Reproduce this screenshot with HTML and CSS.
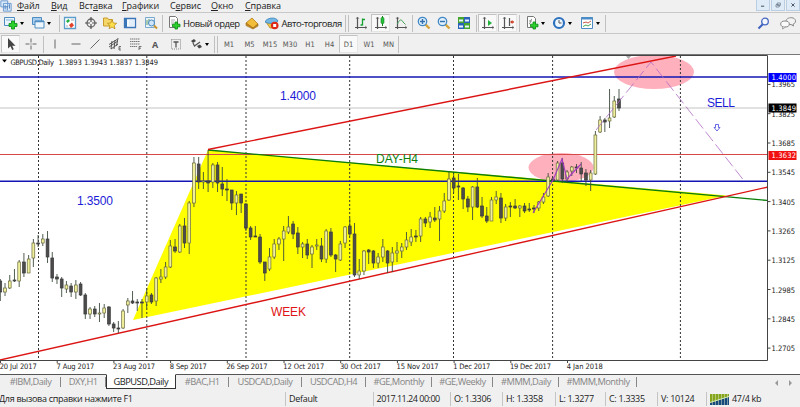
FILE: index.html
```html
<!DOCTYPE html>
<html lang="ru">
<head>
    <meta charset="UTF-8">
    <meta name="viewport" content="width=device-width, initial-scale=1.0">
    <title>GBPUSD,Daily</title>
    <link rel="stylesheet" href="styles.css">
</head>
<body>
    <svg class="symbols">
        <symbol id="i-app" viewBox="0 0 14 14"><path d="M1 1h8v7H1zM4 4h9v9H4z" fill="#dcecfb" stroke="#5b8fcb"/><path d="M6 6v5M8.500 7v5M11 5v5" stroke="#3f74b5"/></symbol>
        <symbol id="i-newchart" viewBox="0 0 14 14"><path d="M.5 1.500h10v8H.5z" fill="#eaf4fc" stroke="#4f8dc0"/><path d="M2 4h7" stroke="#7db4dd"/><path d="M7.500 5h3v2.500H13v3h-2.500V13h-3v-2.500H5v-3h2.500z" fill="#2bd02b" stroke="#078a15" stroke-width=".8"/></symbol>
        <symbol id="i-profiles" viewBox="0 0 14 14"><path d="M1.500 1.500h9v7h-9z" fill="#a8cdee" stroke="#4f8dc0"/><path d="M4 5h9v7H4z" fill="#eef6fd" stroke="#4f8dc0"/><path d="M4 5.500h9" stroke="#4f8dc0" stroke-width="1.500"/></symbol>
        <symbol id="i-market" viewBox="0 0 14 14"><path d="M1.500 1.500h11v11h-11z" fill="#fff" stroke="#5d9dcc" stroke-width="1.300"/><path d="M3 5l2.500-2L7 5 4.500 7z" fill="#20b040"/><path d="M6 9l3-2.500 2 3L8 12z" fill="#e5442c"/><path d="M8 4h3M3 10h2" stroke="#aaa"/></symbol>
        <symbol id="i-target" viewBox="0 0 14 14"><circle cx="7" cy="7" r="4" fill="none" stroke="#666" stroke-width="1.300"/><path d="M7 1v5M7 8v5M1 7h5M8 7h5" stroke="#555" stroke-width="1.200"/></symbol>
        <symbol id="i-navigator" viewBox="0 0 14 14"><path d="M.5 2h4l1 1.500h4V10h-9z" fill="#f5d769" stroke="#c99b2c"/><path d="M9 4l1.400 3 3.200.3-2.400 2.200.8 3.300L9 11l-2.900 1.800.8-3.300L4.500 7.300l3.200-.3z" fill="#ffe14d" stroke="#b98b1c" stroke-width=".8"/></symbol>
        <symbol id="i-terminal" viewBox="0 0 14 14"><path d="M1.500 2.500h11v9h-11z" fill="#f5faff" stroke="#3975b7" stroke-width="1.300"/><path d="M3 3v8" stroke="#3975b7" stroke-width="2"/><path d="M6 5h5M6 7h5M6 9h5" stroke="#b7d3ef" stroke-width=".6"/></symbol>
        <symbol id="i-tester" viewBox="0 0 14 14"><path d="M1.500 1.500h9v10h-9z" fill="#e9f3fb" stroke="#79a9cf"/><path d="M3 4v5M5 3v4" stroke="#64a064"/><circle cx="7.500" cy="7" r="3" fill="#cfe6fa" stroke="#4a88bd"/><path d="M10 9.500l3 3" stroke="#c8962b" stroke-width="2"/></symbol>
        <symbol id="i-order" viewBox="0 0 14 14"><path d="M2.500.5h6l2 2v9h-8z" fill="#fff" stroke="#777"/><path d="M4 4h4M4 6h3M4 8h3" stroke="#999" stroke-width=".8"/><path d="M8 6h2.500v2.200H13v2.600h-2.500V13H8v-2.200H5.500V8.200H8z" fill="#2bd02b" stroke="#078a15" stroke-width=".8"/></symbol>
        <symbol id="i-book" viewBox="0 0 14 14"><path d="M1 7l6-5 6 6-5 4z" fill="#f1bd3a" stroke="#b67a16" stroke-width=".8"/><path d="M1 7v2.500l7 3.500 5-3V8l-5 4z" fill="#c98b22" stroke="#9c6a12" stroke-width=".6"/></symbol>
        <symbol id="i-auto" viewBox="0 0 14 14"><path d="M1 6h11l-3 6H5z" fill="#f0c340" stroke="#b78a25" stroke-width=".8"/><path d="M0 6c1-4 11-6 13-1-2 3-10 3-13 1z" fill="#74b8e6" stroke="#3a84b8" stroke-width=".8"/><circle cx="9.700" cy="9.500" r="3.800" fill="#dd2a16"/><path d="M8.200 8h3v3h-3z" fill="#fff"/></symbol>
        <symbol id="i-bars" viewBox="0 0 14 14"><path d="M3.500 1v12M1 11.500h12" stroke="#555" stroke-width="1.200"/><path d="M2 3l1.500-2L5 3M11 10l2 1.500-2 1.500" fill="none" stroke="#777" stroke-width=".7"/><path d="M8.500 2.500v7M8.500 3.500H11M6.500 9h2" stroke="#15a030" stroke-width="1.300"/></symbol>
        <symbol id="i-candle" viewBox="0 0 14 14"><path d="M3.500 1v12M1 11.500h12" stroke="#555" stroke-width="1.200"/><path d="M2 3l1.500-2L5 3M11 10l2 1.500-2 1.500" fill="none" stroke="#777" stroke-width=".7"/><path d="M8.500 0v10" stroke="#15801c"/><rect x="7" y="1.500" width="3" height="6" rx="1" fill="#22c43c" stroke="#15801c" stroke-width=".6"/></symbol>
        <symbol id="i-line" viewBox="0 0 14 14"><path d="M3.500 1v12M1 11.500h12" stroke="#555" stroke-width="1.200"/><path d="M2 3l1.500-2L5 3M11 10l2 1.500-2 1.500" fill="none" stroke="#777" stroke-width=".7"/><path d="M3.500 8c2-5 4-5 5.500-2l2.500 2.500" fill="none" stroke="#42a155"/></symbol>
        <symbol id="i-zoomin" viewBox="0 0 14 14"><path d="M8.500 8.500l4 4" stroke="#d4a437" stroke-width="2.400"/><circle cx="5.500" cy="5.500" r="4.200" fill="#dff0fc" stroke="#4187c4" stroke-width="1.300"/><path d="M3 5.500h5M5.500 3v5" stroke="#316fae" stroke-width="1.400"/></symbol>
        <symbol id="i-zoomout" viewBox="0 0 14 14"><path d="M8.500 8.500l4 4" stroke="#d4a437" stroke-width="2.400"/><circle cx="5.500" cy="5.500" r="4.200" fill="#dff0fc" stroke="#4187c4" stroke-width="1.300"/><path d="M3 5.500h5" stroke="#316fae" stroke-width="1.400"/></symbol>
        <symbol id="i-tile" viewBox="0 0 14 14"><path d="M1 1h6v6H1zM7 7h6v6H7z" fill="#43a52b"/><path d="M7 1h6v6H7zM1 7h6v6H1z" fill="#2a62ba"/><path d="M2 4.500h4M8 4.500h4M2 10.500h4M8 10.500h4" stroke="#e8f3ff" stroke-width="2.200"/></symbol>
        <symbol id="i-scroll" viewBox="0 0 14 14"><path d="M3.500 1v12M1 11.500h12" stroke="#555" stroke-width="1.200"/><path d="M2 3l1.500-2L5 3M11 10l2 1.500-2 1.500" fill="none" stroke="#777" stroke-width=".7"/><path d="M7 4l4 3-4 3z" fill="#23b23c"/></symbol>
        <symbol id="i-shift" viewBox="0 0 14 14"><path d="M3.500 1v12M1 11.500h12M8.500 2v8" stroke="#555" stroke-width="1.200"/><path d="M2 3l1.500-2L5 3M11 10l2 1.500-2 1.500" fill="none" stroke="#777" stroke-width=".7"/><path d="M9 6l2.500-2v1.300H13v1.400h-1.500V8z" fill="#cf3d24"/></symbol>
        <symbol id="i-indic" viewBox="0 0 14 14"><path d="M2.500.5h6l2 2v9h-8z" fill="#fff" stroke="#777"/><path d="M4 8c2 0 1-5 3-5M4 5h3" fill="none" stroke="#777" stroke-width=".8"/><path d="M8 6h2.500v2.200H13v2.600h-2.500V13H8v-2.200H5.500V8.200H8z" fill="#2bd02b" stroke="#078a15" stroke-width=".8"/></symbol>
        <symbol id="i-clock" viewBox="0 0 14 14"><circle cx="7" cy="7" r="5" fill="#eef6ff" stroke="#2c71bd" stroke-width="2.200"/><path d="M7 4v3h2.500" fill="none" stroke="#555"/></symbol>
        <symbol id="i-template" viewBox="0 0 14 14"><path d="M1.500 1.500h11v11h-11z" fill="#fff" stroke="#4c8cc6"/><path d="M1 2.500h12" stroke="#4c8cc6" stroke-width="2"/><path d="M3 7l3-1 2 1 3-2" fill="none" stroke="#c65b48"/><path d="M3 10.500l3-1.500 2 1 3-2" fill="none" stroke="#4aa554"/></symbol>
        <symbol id="i-search" viewBox="0 0 14 14"><path d="M6 8l-4.500 4.500" stroke="#3d5fc0" stroke-width="2"/><circle cx="8" cy="5.500" r="3.300" fill="#f4f8ff" stroke="#4867c0" stroke-width="1.300"/></symbol>
        <symbol id="i-chat" viewBox="0 0 16 14"><path d="M6 5.500C6 .5 15.500.5 15.500 5c0 2-1.500 3-2.500 3l.5 2-2.500-1.500C8 9 6 7.500 6 5.500z" fill="#f3f3f3" stroke="#888"/><ellipse cx="5" cy="8" rx="4.300" ry="3" fill="#fafafa" stroke="#888"/><path d="M3 10.500L2.500 13 5.500 11" fill="#fafafa" stroke="#888" stroke-width=".8"/></symbol>
        <symbol id="i-cursor" viewBox="0 0 14 14"><path d="M4 1v10.500l2.500-2.200 1.700 3.700 1.600-.8L8.200 8.700h3.300z" fill="#444"/></symbol>
        <symbol id="i-cross" viewBox="0 0 14 14"><path d="M7 1.500v4M7 8.500v4M1.500 7h4M8.500 7h4M6.500 7h1" stroke="#666"/></symbol>
        <symbol id="i-vline" viewBox="0 0 14 14"><path d="M7 2.500v9" stroke="#666"/></symbol>
        <symbol id="i-hline" viewBox="0 0 14 14"><path d="M2.500 7h9" stroke="#666"/></symbol>
        <symbol id="i-trend" viewBox="0 0 14 14"><path d="M2.500 11.500l9-9" stroke="#666"/></symbol>
        <symbol id="i-channel" viewBox="0 0 14 14"><path d="M1 7.500l8-5M1 10l9-6M3 12l7-5M4 4l-1 8M7 3L6 12M10 1L8.500 9" stroke="#555" fill="none"/><path d="M13 9.500h-2v3.500h2M11 11.200h1.700" stroke="#555" fill="none" stroke-width=".8"/></symbol>
        <symbol id="i-fibo" viewBox="0 0 14 14"><path d="M2 2h10M2 4.500h10M2 7h10M2 9.500h7" stroke="#777" stroke-dasharray="1.500 .5"/><path d="M11 13V9.500h2.500M11 11.200h2" stroke="#555" fill="none" stroke-width=".8"/></symbol>
        <symbol id="i-label" viewBox="0 0 14 14"><path d="M2.500 2.500h9v9.500h-9z" fill="none" stroke="#888" stroke-dasharray="1 1"/><path d="M4.500 5h5M7 5v5.500" stroke="#555" stroke-width="1.300"/></symbol>
        <symbol id="i-arrows" viewBox="0 0 14 14"><path d="M2 4l3-2 2 2-3 2zM8 9l3-1.500L13 10l-3 1.500z" fill="#444"/><path d="M4 6l1.500 3L11 5" fill="none" stroke="#555" stroke-width="1.200"/></symbol>
    </svg>

    <div class="window">
        <div class="menubar">
            <svg class="icon"><use href="#i-app"/></svg>
            <span><u>Ф</u>айл</span>
            <span><u>В</u>ид</span>
            <span>Вст<u>а</u>вка</span>
            <span><u>Г</u>рафики</span>
            <span>С<u>е</u>рвис</span>
            <span><u>О</u>кно</span>
            <span><u>С</u>правка</span>
            <div class="controls">
                <svg viewBox="0 0 10 10"><path d="M2.500 6.500h4" stroke="#456" stroke-width="1.300"/></svg>
                <svg viewBox="0 0 10 10"><path d="M4 2.500h4v3H4zM2.500 4.500h4v3h-4z" fill="#e4eef8" stroke="#567" stroke-width=".8"/></svg>
                <svg viewBox="0 0 10 10"><path d="M3 3l4 4M7 3L3 7" stroke="#456" stroke-width="1.200"/></svg>
            </div>
        </div>

        <div class="toolbar standard">
            <div class="drop"><svg class="icon"><use href="#i-newchart"/></svg><i></i></div>
            <div class="drop"><svg class="icon"><use href="#i-profiles"/></svg><i></i></div>
            <b></b>
            <svg class="icon"><use href="#i-market"/></svg>
            <svg class="icon"><use href="#i-target"/></svg>
            <svg class="icon"><use href="#i-navigator"/></svg>
            <svg class="icon"><use href="#i-terminal"/></svg>
            <svg class="icon"><use href="#i-tester"/></svg>
            <b></b>
            <svg class="icon"><use href="#i-order"/></svg>
            <span class="order">Новый ордер</span>
            <svg class="icon"><use href="#i-book"/></svg>
            <svg class="icon"><use href="#i-auto"/></svg>
            <span class="auto">Авто-торговля</span>
            <b></b>
            <b></b>
            <svg class="icon"><use href="#i-bars"/></svg>
            <div class="pressed"><svg class="icon"><use href="#i-candle"/></svg></div>
            <svg class="icon"><use href="#i-line"/></svg>
            <b></b>
            <svg class="icon"><use href="#i-zoomin"/></svg>
            <svg class="icon"><use href="#i-zoomout"/></svg>
            <svg class="icon"><use href="#i-tile"/></svg>
            <b></b>
            <div class="pressed"><svg class="icon"><use href="#i-scroll"/></svg></div>
            <div class="pressed"><svg class="icon"><use href="#i-shift"/></svg></div>
            <b></b>
            <div class="drop"><svg class="icon"><use href="#i-indic"/></svg><i></i></div>
            <div class="drop"><svg class="icon"><use href="#i-clock"/></svg><i></i></div>
            <div class="drop"><svg class="icon"><use href="#i-template"/></svg><i></i></div>
            <b></b>
            <svg class="icon"><use href="#i-search"/></svg>
            <svg class="icon chat"><use href="#i-chat"/></svg>
        </div>

        <div class="toolbar tools">
            <div class="pressed"><svg class="icon"><use href="#i-cursor"/></svg></div>
            <svg class="icon"><use href="#i-cross"/></svg>
            <b></b>
            <svg class="icon"><use href="#i-vline"/></svg>
            <svg class="icon"><use href="#i-hline"/></svg>
            <svg class="icon"><use href="#i-trend"/></svg>
            <svg class="icon"><use href="#i-channel"/></svg>
            <svg class="icon"><use href="#i-fibo"/></svg>
            <span class="letter">A</span>
            <svg class="icon"><use href="#i-label"/></svg>
            <div class="drop"><svg class="icon"><use href="#i-arrows"/></svg><i></i></div>
            <b></b>
            <b></b>
            <span class="tf">M1</span>
            <span class="tf">M5</span>
            <span class="tf">M15</span>
            <span class="tf">M30</span>
            <span class="tf">H1</span>
            <span class="tf">H4</span>
            <span class="tf pressed">D1</span>
            <span class="tf">W1</span>
            <span class="tf">MN</span>
            <b></b>
        </div>

        <svg class="chart" viewBox="0 54 800 320">
            <defs>
                <clipPath id="plot"><rect x="0" y="56" width="767" height="304"/></clipPath>
            </defs>
            <g clip-path="url(#plot)">
                <polygon points="208,150 133,320 727,195.500" fill="#ff0"/>
                <ellipse cx="654" cy="72" rx="40" ry="17" fill="#ffb0bd"/>
                <ellipse cx="561" cy="167.500" rx="32.500" ry="14.500" fill="#ffb0bd"/>
                <path d="M95 55l3.500 4 3.500-4z" transform="translate(530)" fill="#aaa"/>
                <g id="periods" class="period"></g>
                <path d="M0 108h768" stroke="#c4c4c4"/>
                <path d="M0 154.500h768" stroke="#d84848"/>
                <path d="M0 77h768M0 181.300h768" stroke="#1414b4" stroke-width="1.400"/>
                <path d="M208 150L768 200.500" stroke="#0a7d0a" stroke-width="1.400"/>
                <path d="M208 149.500L676 56M0 360L768 187" stroke="#dc1414" stroke-width="1.400"/>
                <g id="candles"></g>
                <path d="M533 213L553 180 562 159 567 179 581 164" class="zigzag"/>
                <path d="M596 130L651 62 745 182" class="forecast"/>
            </g>
            <path d="M0 55.500H767.500V360.500H0" fill="none" stroke="#444"/>
            <path d="M2 59.500h5l-2.500 3z" fill="#000"/>
            <text x="10.500" y="64.500" class="small" textLength="43.500">GBPUSD,Daily</text>
            <text x="58.500" y="64.500" class="small" textLength="99.500">1.3893 1.3943 1.3837 1.3849</text>
            <text x="280" y="100" class="note blue" textLength="36">1.4000</text>
            <text x="77" y="205" class="note blue" textLength="36">1.3500</text>
            <text x="707" y="107" class="note blue" textLength="28">SELL</text>
            <text x="376" y="163" class="note green" textLength="42">DAY-H4</text>
            <text x="271" y="316" class="note red" textLength="35">WEEK</text>
            <path d="M715.500 124.500h3v3h1.500l-3 3.500-3-3.500h1.500z" fill="#fff" stroke="#4444e0" stroke-width=".8"/>
            <g id="prices"></g>
            <g id="dates"></g>
            <rect x="768.500" y="73" width="28" height="9" fill="#00f"/>
            <rect x="768.500" y="103.500" width="28" height="9" fill="#000"/>
            <rect x="768.500" y="151" width="28" height="9" fill="#f01010"/>
            <text x="771.500" y="80.200" class="small white" textLength="24.500">1.4000</text>
            <text x="771.500" y="110.700" class="small white" textLength="24.500">1.3849</text>
            <text x="771.500" y="158.200" class="small white" textLength="24.500">1.3632</text>
        </svg>

        <div class="tabs">
            <span>#IBM,Daily</span>
            <span>DXY,H1</span>
            <span class="active">GBPUSD,Daily</span>
            <span>#BAC,H1</span>
            <span>USDCAD,Daily</span>
            <span>USDCAD,H4</span>
            <span>#GE,Monthly</span>
            <span>#GE,Weekly</span>
            <span>#MMM,Daily</span>
            <span>#MMM,Monthly</span>
            <svg class="scroll" viewBox="0 0 20 8"><path d="M4 1v6L1 4zM15 1v6l3-3z" fill="#999"/></svg>
        </div>

        <div class="status">
            <span class="help">Для вызова справки нажмите F1</span>
            <span>Default</span>
            <span class="time">2017.11.24 00:00</span>
            <span>O: 1.3306</span>
            <span>H: 1.3358</span>
            <span>L: 1.3277</span>
            <span>C: 1.3335</span>
            <span>V: 10124</span>
            <span class="traffic">
                <svg viewBox="0 0 19 11"><path d="M0 0h19v11H0z" fill="#86a51c"/><path d="M0 11V9L19 3v8z" fill="#164a7c"/><path d="M0 8.500L19 2.500" stroke="#cfe3c0"/><path d="M2.500 0v11M5.500 0v11M8.500 0v11M11.500 0v11M14.500 0v11M17.500 0v11" stroke="#dfe8c8" stroke-width=".5"/></svg>
                47/4 kb
            </span>
        </div>
    </div>

    <script>
        // high, low, body top, body bottom, 1 = bullish
        const bars = [
            [279,301,281,292,0],[283,296,288,292,1],[275,289,281,288,1],[269,282,280,281,0],[260,287,262,281,1],
            [253,277,262,273,0],[255,273,259,273,1],[239,267,243,258,1],[235,247,243,244,0],[234,246,239,243,1],
            [231,263,239,257,0],[252,282,258,278,0],[274,284,277,279,0],[277,297,279,288,0],[281,293,285,289,1],
            [283,297,286,292,0],[280,299,285,292,1],[282,296,284,295,0],[293,319,295,314,0],[307,319,309,314,1],
            [306,317,309,314,0],[303,322,313,314,1],[304,318,308,313,1],[306,326,307,324,0],[322,332,324,328,0],
            [321,333,328,329,0],[309,329,311,328,1],[298,313,301,305,1],[291,304,301,303,0],[299,311,302,303,0],
            [299,318,302,303,0],[288,308,296,302,1],[293,304,295,302,0],[277,306,278,301,1],[269,283,277,279,1],
            [262,279,267,277,1],[240,268,246,267,1],[239,253,247,251,0],[224,253,226,252,1],[218,248,226,243,0],
            [201,254,203,243,1],[157,207,163,203,1],[157,189,164,182,0],[172,189,181,182,1],[150,192,181,183,0],
            [163,188,165,182,1],[162,192,165,183,0],[167,196,184,189,0],[179,201,189,190,0],[190,210,190,203,0],
            [191,215,195,203,1],[194,213,194,203,0],[203,231,204,228,0],[226,240,228,237,0],[226,237,236,237,0],
            [234,264,237,262,0],[262,281,262,273,0],[248,271,257,269,1],[239,259,244,257,1],[237,250,239,244,1],
            [226,261,231,239,1],[216,234,227,232,1],[221,239,224,234,0],[227,254,233,247,0],[242,258,244,247,1],
            [239,259,244,255,0],[245,268,247,254,1],[239,250,245,246,1],[238,262,246,259,0],[229,263,231,259,1],
            [228,257,232,255,0],[254,272,255,259,0],[241,261,244,260,1],[226,248,227,243,1],[218,236,226,234,0],
            [223,277,234,275,0],[259,279,271,275,1],[250,275,251,271,1],[249,264,250,252,0],[250,268,251,263,0],
            [253,268,257,263,1],[239,262,247,257,1],[250,273,251,263,0],[247,272,253,262,1],[242,262,251,253,1],
            [243,258,247,251,1],[232,250,240,247,1],[229,246,237,242,1],[230,242,236,237,0],[217,242,219,236,1],
            [217,227,219,223,0],[212,228,217,222,1],[207,222,218,220,0],[206,241,211,219,1],[193,213,201,211,1],
            [172,201,179,200,1],[173,193,178,188,0],[174,200,186,187,0],[187,209,188,199,0],[196,212,199,207,0],
            [186,220,187,207,1],[178,208,187,207,0],[197,218,206,216,0],[207,223,216,221,0],[197,221,200,221,1],
            [191,204,197,200,1],[193,223,198,218,0],[204,221,207,218,1],[202,217,206,207,0],[199,209,206,208,0],
            [205,217,206,208,1],[203,213,206,211,0],[203,212,209,210,0],[205,213,208,209,0],[201,211,202,208,1],
            [193,204,197,202,1],[173,197,177,196,1],[177,182,179,181,0],[161,181,163,180,1],[158,183,163,179,0],
            [170,183,172,179,1],[166,176,167,171,1],[164,173,167,168,0],[162,181,168,174,0],[169,186,173,180,0],
            [170,191,173,180,1],[131,175,135,174,1],[116,133,120,132,1],[118,132,120,122,0],[89,128,118,121,1],
            [96,118,101,117,1],[89,111,99,108,0]
        ];
        const step = (619 - 0.3) / (bars.length - 1);

        let out = '';
        bars.forEach(function (b, i) {
            const x = 0.3 + i * step;
            out += `<path d="M${x} ${b[0]}V${b[1]}" class="wick"/>`;
            out += `<rect x="${x - 1.4}" y="${b[2]}" width="2.8" height="${Math.max(b[3] - b[2], 0.6)}" class="${b[4] ? 'up' : 'down'}"/>`;
        });
        document.getElementById('candles').innerHTML = out;

        out = '';
        [38.5, 146.8, 246, 349.7, 453.5, 552.6, 680.4].forEach(function (x) {
            out += `<path d="M${x} 56V360"/>`;
        });
        document.getElementById('periods').innerHTML = out;

        // price axis, 140 points per label
        out = '';
        for (let i = 0; i < 10; i++) {
            const y = 84.4 + i * 29.3;
            out += `<path d="M768 ${y}h2.5" stroke="#444"/>`;
            out += `<text x="771.5" y="${y + 3}" class="small" textLength="23.5">${(1.3965 - i * 0.014).toFixed(4)}</text>`;
        }
        document.getElementById('prices').innerHTML = out;

        const dates = [
            ['20 Jul 2017', 37], ['7 Aug 2017', 38], ['23 Aug 2017', 42], ['8 Sep 2017', 37], ['26 Sep 2017', 41],
            ['12 Oct 2017', 41], ['30 Oct 2017', 41], ['15 Nov 2017', 42], ['1 Dec 2017', 37], ['19 Dec 2017', 41], ['4 Jan 2018', 36]
        ];
        out = '';
        dates.forEach(function (d, i) {
            const x = i * 56.7;
            out += `<path d="M${x + 0.5} 360v3" stroke="#444"/>`;
            out += `<text x="${x - 0.3}" y="369" class="small" textLength="${d[1]}">${d[0]}</text>`;
        });
        document.getElementById('dates').innerHTML = out;
    </script>
</body>
</html>
```
FILE: styles.css
```css
* {
    box-sizing: border-box;
}
body {
    margin: 0;
    font-family: 'Open Sans', 'Noto Sans', sans-serif;
    font-size: 9px;
    color: #222;
    background-color: #f0f0f0;
    overflow: hidden;
}
.symbols {
    display: none;
}
.window {
    display: flex;
    flex-direction: column;
    width: 800px;
    height: 407px;
}
.icon {
    display: block;
    width: 14px;
    height: 14px;
}
.chat {
    width: 16px;
}

/* menu */
.menubar {
    display: grid;
    grid-template-columns: 17px 34px 28px 43px 48px 41px 34px 1fr auto;
    height: 13px;
    line-height: 11px;
    letter-spacing: -0.1px;
    border-bottom: 1px solid #c8c8c8;
    white-space: nowrap;
}
.menubar .icon {
    width: 12px;
    height: 12px;
}
.menubar u {
    text-decoration-thickness: 1px;
    text-underline-offset: 1px;
}
.controls {
    display: flex;
    gap: 1px;
}
.controls svg {
    width: 14px;
    height: 11px;
    padding: 1px;
    background-color: #dfebf7;
    border: 1px solid #b9cee3;
    border-top: none;
}

/* toolbars */
.toolbar {
    display: grid;
    align-items: center;
    white-space: nowrap;
}
.toolbar b {
    width: 1px;
    height: 17px;
    background-color: #c0c0c0;
}
.standard {
    grid-template-columns: 27px 28px 4px 20.5px 19.5px 20px 21px 18px 5px 16px 62px 20px 16.500px 63.500px 3px 6px 17px 23px 18px 5px 20px 20px 19px 2px 20px 21px 6px 27px 28px 25px 151.500px 23px 1fr;
    padding-left: 4px;
    height: 20px;
}
.drop {
    display: flex;
    align-items: center;
    gap: 2px;
}
.drop i {
    border: 2px solid transparent;
    border-top: 3px solid #000;
    border-bottom: none;
}
.pressed {
    display: flex;
    align-items: center;
    justify-content: center;
    width: 19px;
    height: 18px;
    background-color: #f9f9f9;
    border: 1px solid #c2c2c2;
    border-right-color: #e5e5e5;
    border-bottom-color: #e5e5e5;
}
.order {
    font-size: 9.500px;
    letter-spacing: -0.5px;
}
.auto {
    font-size: 9.500px;
    letter-spacing: -0.5px;
}
.tools {
    grid-template-columns: 23px 19px 5px 21px 19px 20px 20px 24px 16.500px 20.500px 25px 3px 2px 20px 21px 20px 20px 20px 19px 20px 20px 19px 1fr;
    padding-left: 1px;
    height: 21px;
    border-top: 1px solid #c8c8c8;
}
.tools .letter {
    font-weight: 700;
    font-size: 9px;
    color: #555;
}
.tf {
    text-align: center;
    font-family: 'DejaVu Sans Condensed', 'DejaVu Sans', sans-serif;
    font-size: 7.500px;
    color: #555;
}

/* chart */
.chart {
    display: block;
    width: 800px;
    height: 320px;
    background-color: #fff;
    box-shadow: inset 0 1px #777;
}
.chart text {
    font-family: 'DejaVu Sans Condensed', 'DejaVu Sans', sans-serif;
}
.chart .small {
    font-size: 7.500px;
    fill: #222;
}
.chart .white {
    fill: #fff;
}
.chart .note {
    font-family: 'Liberation Sans', Arial, sans-serif;
    font-size: 12px;
}
.chart .blue {
    fill: #1c1cd8;
}
.chart .green {
    fill: #108010;
}
.chart .red {
    fill: #e01414;
}
.period {
    stroke: #333;
    stroke-dasharray: 2 2;
}
.wick {
    stroke: #3c4c3c;
    stroke-width: 0.9;
}
.up {
    fill: #f0f09c;
    stroke: #6a6a40;
    stroke-width: 0.7;
}
.down {
    fill: #4c4c4c;
    stroke: #3a3a3a;
    stroke-width: 0.7;
}
.zigzag {
    fill: none;
    stroke: #a238c0;
    stroke-width: 1.100;
}
.forecast {
    fill: none;
    stroke: #b06cc4;
    stroke-width: 0.8;
    stroke-dasharray: 12 4;
}

/* chart tabs */
.tabs {
    display: grid;
    grid-template-columns: 61px 44.500px 70.500px 52.500px 73px 64px 66.500px 61px 66px 78px 1fr;
    height: 16px;
    border-top: 1px solid #555;
    color: #858585;
    font-size: 9.300px;
    letter-spacing: -0.5px;
    line-height: 14px;
    white-space: nowrap;
}
.tabs span {
    display: flex;
    justify-content: center;
    height: 13px;
    background-image: linear-gradient(#888, #888);
    background-size: 1px 10px;
    background-position: right 2px;
    background-repeat: no-repeat;
}
.tabs .active {
    height: 15px;
    margin-top: -1px;
    background: #fff;
    border: 1px solid #333;
    border-top-color: #fff;
    color: #222;
}
.scroll {
    justify-self: end;
    align-self: center;
    width: 20px;
    height: 8px;
    margin-right: 6px;
}

/* status bar */
.status {
    display: grid;
    grid-template-columns: 285px 87.500px 77.500px 52px 53px 50px 52px 49px 1fr;
    height: 17px;
    padding-top: 2px;
    line-height: 14px;
    letter-spacing: -0.3px;
    white-space: nowrap;
}
.status span {
    padding-left: 3px;
    border-left: 1px solid #c4c4c4;
    height: 14px;
}
.status .help {
    padding-left: 0;
    border-left: none;
    margin-left: -1px;
}
.status .time {
    letter-spacing: -0.5px;
}
.traffic {
    display: flex;
    align-items: center;
    gap: 3px;
}
.traffic svg {
    width: 19px;
    height: 11px;
}
```
